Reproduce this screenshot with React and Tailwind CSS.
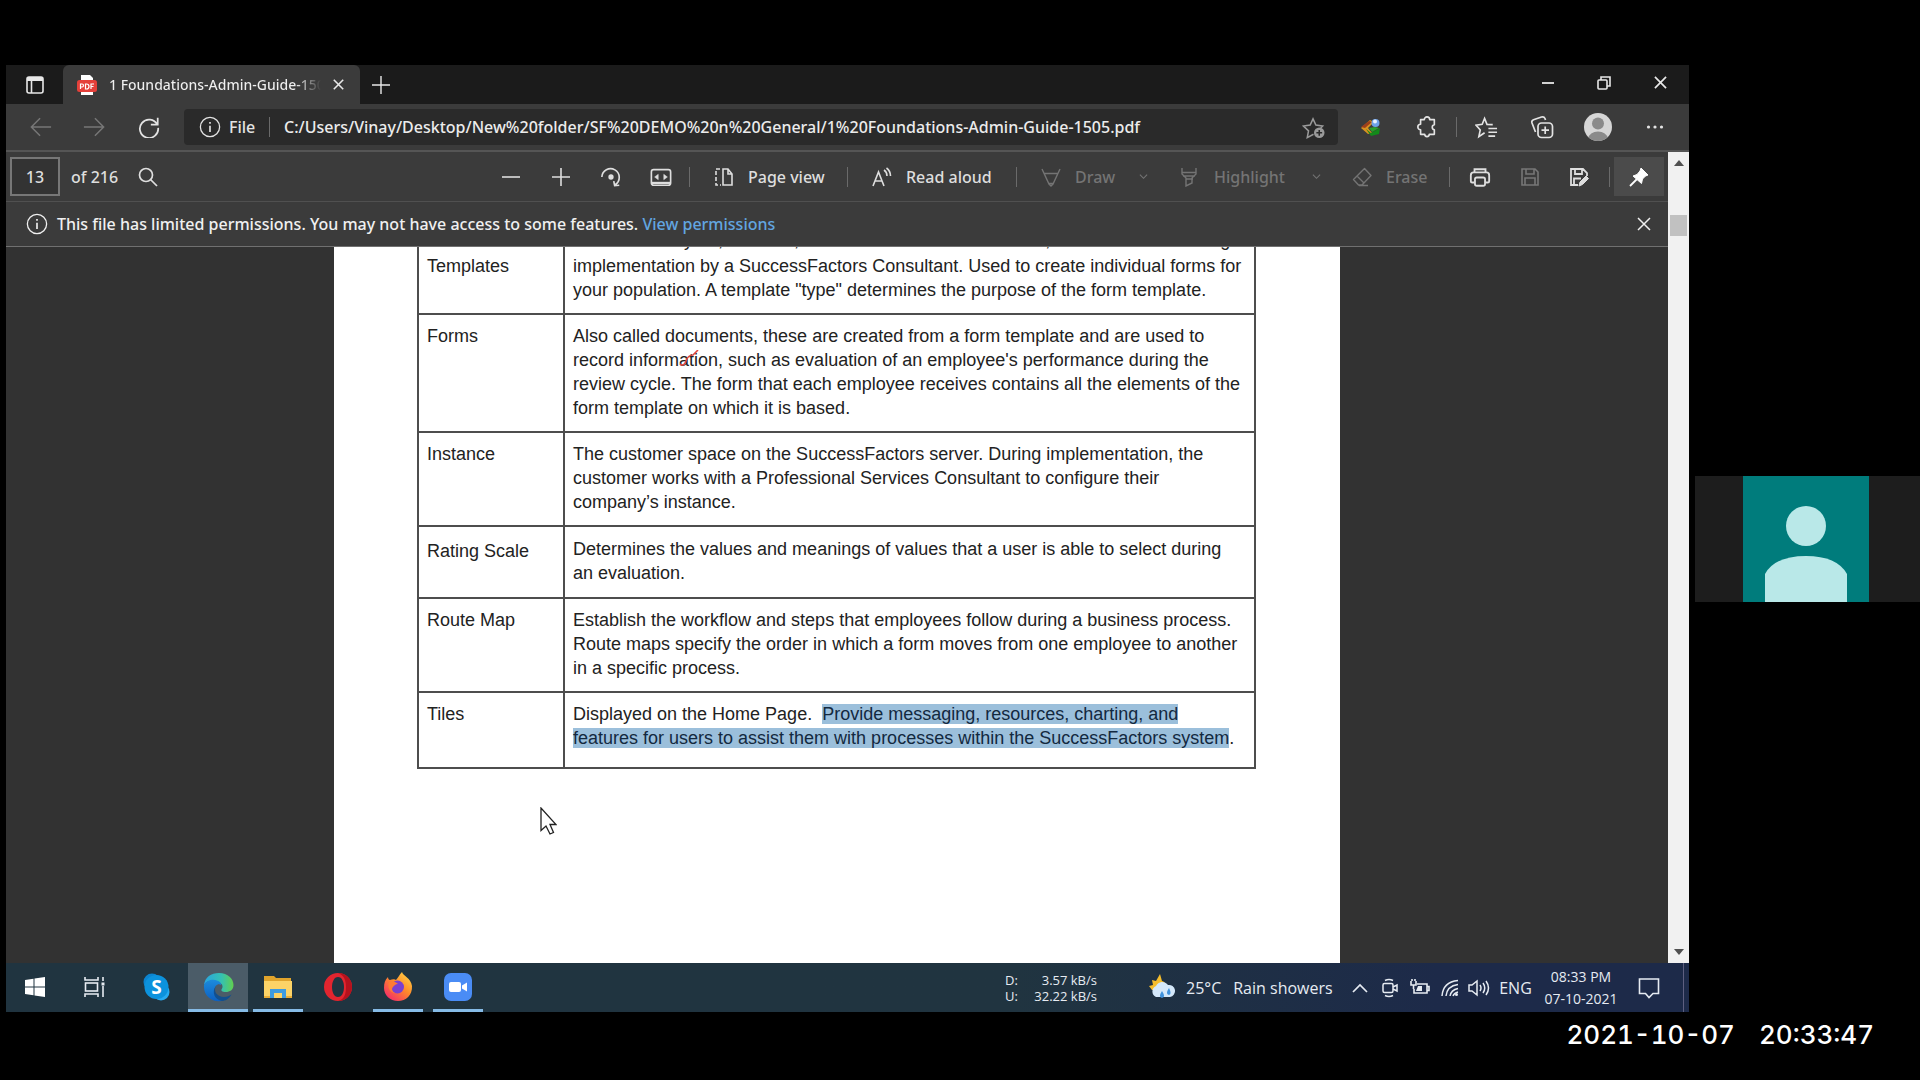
import React from 'react';

const UI = "font-['Noto_Sans','Open_Sans',sans-serif]";

function Icon({ size = 24, className = '', children, sw = 1.6, box = 24 }) {
  return (
    <svg width={size} height={size} viewBox={`0 0 ${box} ${box}`} fill="none" stroke="currentColor" strokeWidth={sw} className={`shrink-0 ${className}`} aria-hidden="true">
      {children}
    </svg>
  );
}

function IconButton({ label, className = 'w-[50px]', children }) {
  return (
    <button type="button" aria-label={label} className={`flex shrink-0 items-center justify-center ${className}`}>
      {children}
    </button>
  );
}

const Divider = ({ className = '' }) => <span className={`h-5 w-px shrink-0 bg-[#6a6a6a] ${className}`} />;

const Cross = ({ size = 14, sw = 1.8 }) => (
  <Icon size={size} box={14} sw={sw}><path d="M1 1l12 12M13 1L1 13" /></Icon>
);

const InfoIcon = () => (
  <Icon size={22} sw={1.4}><circle cx="12" cy="12" r="10.5" /><path d="M12 10.5v7M12 6.5v2" strokeWidth="1.8" /></Icon>
);

function TabBar() {
  return (
    <div className="flex h-[39px] shrink-0 bg-[#1b1b1b] text-[#e8e8e8]">
      <IconButton label="Tab actions" className="w-[57px]">
        <Icon size={20} box={20} sw={1.6}><rect x="2" y="2" width="16" height="16" rx="2" /><path d="M2 4h16" strokeWidth="4" /><path d="M6.500 5v13" /></Icon>
      </IconButton>
      <div className="flex w-[297px] items-center rounded-t-md bg-[#3b3b3b] pl-3.5">
        <svg width="20" height="22" viewBox="0 0 20 22" className="shrink-0" aria-hidden="true">
          <path d="M4 1h9l3 3v17H4z" fill="#fff" />
          <rect x="0" y="6" width="20" height="12" rx="2.500" fill="#e5403a" />
          <path d="M3.500 15v-5h1.500a1.500 1.500 0 0 1 0 3H3.500M8.500 10v5h1a2.500 2.500 0 0 0 0-5zM14 15v-5h3M14 12.500h2.500" stroke="#fff" strokeWidth="1.200" fill="none" />
        </svg>
        <span className="ml-3 w-[212px] overflow-hidden whitespace-nowrap bg-linear-to-r from-[#f0f0f0] from-88% to-transparent bg-clip-text text-sm font-medium text-transparent">1 Foundations-Admin-Guide-1505.pdf</span>
        <IconButton label="Close tab" className="w-[34px]"><Cross size={11} sw={2} /></IconButton>
      </div>
      <IconButton label="New tab" className="w-[42px]">
        <Icon size={18} box={18} sw={1.4}><path d="M9 0v18M0 9h18" /></Icon>
      </IconButton>
      <div className="flex-1" />
      <div className="flex h-[35px]">
        <IconButton label="Minimize" className="w-[56px]"><Icon size={12} box={12} sw={1.8}><path d="M0 6h12" /></Icon></IconButton>
        <IconButton label="Restore" className="w-[56px]">
          <Icon size={14} box={14} sw={1.6}><rect x="1" y="4" width="9" height="9" rx="1" /><path d="M4 4V1h9v9h-3" /></Icon>
        </IconButton>
        <IconButton label="Close" className="w-[57px]"><Cross size={13} sw={1.8} /></IconButton>
      </div>
    </div>
  );
}

function AddressBar() {
  return (
    <div className="flex h-12 shrink-0 items-center border-b-2 border-[#555] bg-[#3b3b3b] text-[#e3e3e3]">
      <IconButton label="Back" className="ml-2.5 w-[50px] text-[#777]"><Icon size={22} sw={1.6}><path d="M23 12H2M11 2.500L1.500 12l9.500 9.500" /></Icon></IconButton>
      <IconButton label="Forward" className="w-[56px] text-[#777]"><Icon size={22} sw={1.6}><path d="M1 12h21M13 2.500L22.500 12 13 21.500" /></Icon></IconButton>
      <IconButton label="Refresh" className="w-[54px]"><Icon size={22} sw={1.900}><path d="M21 9.500A10 10 0 1 0 22 13M21.500 2v7.500H14" /></Icon></IconButton>
      <div className="ml-2 flex h-[36px] flex-1 items-center rounded-sm bg-[#2a2a2a] pl-[15px]">
        <InfoIcon />
        <span className="ml-2 w-[32px] text-base font-medium">File</span>
        <Divider className="ml-2 mr-[14px]" />
        <input aria-label="Address" readOnly value="C:/Users/Vinay/Desktop/New%20folder/SF%20DEMO%20n%20General/1%20Foundations-Admin-Guide-1505.pdf" className="min-w-0 flex-1 bg-transparent text-base font-medium text-[#ececec] outline-none" />
        <IconButton label="Add to favorites" className="w-[50px] text-[#9a9a9a]">
          <Icon size={23} sw={1.6}>
            <path d="M12 19l-6.500 3.500 1.300-7L1.500 10.500l7-1L11.500 3l3 6.500 7 1-2 2" />
            <circle cx="18" cy="17.500" r="5.500" fill="#9a9a9a" stroke="none" /><path d="M18 14.500v6M15 17.500h6" stroke="#2a2a2a" />
          </Icon>
        </IconButton>
      </div>
      <IconButton label="Download manager" className="ml-1.5 w-[54px]">
        <svg width="20" height="18" viewBox="0 0 20 18" aria-hidden="true">
          <path d="M0 10L9 2l4 2-6 6 4 5-4 1z" fill="#d9911f" />
          <path d="M0 9L8 3l3 1-7 6z" fill="#9c3f1c" />
          <path d="M5 11l5 4 9-5-1 6-8 2z" fill="#128a1a" />
          <circle cx="14.500" cy="5" r="4" fill="#6fa2e8" /><circle cx="14" cy="3.500" r="2" fill="#e9f2ff" />
          <path d="M8 10l6-1 4 1-7 4z" fill="#2ba12c" />
        </svg>
      </IconButton>
      <IconButton label="Extensions" className="w-[58px]">
        <Icon size={22} sw={1.800}><path d="M9 4a3 3 0 0 1 6 0h5v5.500a2.800 2.800 0 0 0 0 5.500v5h-5.500a2.500 2.500 0 0 1-5 0H5v-5a3 3 0 0 1 0-6V4z" strokeLinejoin="round" /></Icon>
      </IconButton>
      <Divider />
      <IconButton label="Favorites" className="w-[58px]">
        <Icon size={23} sw={1.700}><path d="M10 17.500L4 21.500l1.500-7L1 9.500l6.500-.8L10 2.500l2.500 6.200 6 .3M14 13h9M14 17h9M14 21h7M12 11.500h0" /></Icon>
      </IconButton>
      <IconButton label="Collections" className="w-[54px]">
        <Icon size={24} sw={1.700}><rect x="8" y="8" width="14.500" height="14.500" rx="3.500" /><path d="M15.200 11.500v7.500M11.500 15.200h7.500M5.500 17L2 8q-.8-2.500 1.500-3.300l8-2.700q2.500-.8 3.500 1.500l.5 1.500" /></Icon>
      </IconButton>
      <IconButton label="Profile" className="w-[58px]">
        <svg width="28" height="28" viewBox="0 0 28 28" aria-hidden="true">
          <defs><clipPath id="av"><circle cx="14" cy="14" r="14" /></clipPath></defs>
          <g clipPath="url(#av)"><path d="M0 0h28v28H0z" fill="#d6d6d6" /><circle cx="14" cy="10.500" r="6" fill="#8a8a8a" /><ellipse cx="14" cy="25" rx="9.500" ry="6.500" fill="#8a8a8a" /></g>
        </svg>
      </IconButton>
      <IconButton label="Settings and more" className="mr-[6px] w-[56px]">
        <Icon size={18} box={18}><g fill="currentColor" stroke="none"><circle cx="2.500" cy="9" r="1.600" /><circle cx="9" cy="9" r="1.600" /><circle cx="15.500" cy="9" r="1.600" /></g></Icon>
      </IconButton>
    </div>
  );
}

function ToolButton({ label, className, icon }) {
  return (
    <button type="button" className={`flex shrink-0 items-center gap-3.5 text-base font-medium ${className}`}>
      {icon}
      <span className="whitespace-nowrap">{label}</span>
    </button>
  );
}

const Chevron = () => <Icon size={9} box={10} sw={1.2}><path d="M1 3l4 4 4-4" /></Icon>;

function PdfToolbar() {
  return (
    <div className="flex h-[50px] shrink-0 items-center border-b border-[#505050] bg-[#3b3b3b] text-[#dedede]">
      <input aria-label="Page number" defaultValue="13" className="ml-1 h-[39px] w-[50px] border-2 border-[#777] bg-[#333] text-center text-base font-medium" />
      <span className="ml-[11px] w-[48px] whitespace-nowrap text-base font-medium">of 216</span>
      <IconButton label="Find" className="ml-2 w-[42px]"><Icon size={20} box={20} sw={1.700}><circle cx="8" cy="8" r="6.500" /><path d="M12.500 12.500L19 19" /></Icon></IconButton>
      <div className="flex-1" />
      <IconButton label="Zoom out"><Icon size={18} box={18} sw={1.600}><path d="M0 9h18" /></Icon></IconButton>
      <IconButton label="Zoom in"><Icon size={18} box={18} sw={1.600}><path d="M0 9h18M9 0v18" /></Icon></IconButton>
      <IconButton label="Rotate">
        <Icon size={22} sw={1.800}><circle cx="12" cy="12" r="2" fill="currentColor" /><path d="M2 12a9.500 9.500 0 1 1 14.500 8.500M15 16.500l1 5 5-.5" /></Icon>
      </IconButton>
      <IconButton label="Fit to width">
        <Icon size={22} sw={1.800}><rect x="1.500" y="4" width="21" height="17" rx="2.500" /><path d="M2 18.500h20" strokeWidth="2.500" /><path d="M5 12l4-3v6zM19 12l-4-3v6z" fill="currentColor" strokeWidth=".5" /></Icon>
      </IconButton>
      <Divider className="ml-[3px]" />
      <ToolButton label="Page view" className="w-[157px] pl-6" icon={
        <Icon size={20} box={20} sw={1.600}><path d="M9 2v16h9V7l-4-5zM14 2v5h4" /><path d="M6 2H2v16h5" strokeDasharray="4 2" /></Icon>
      } />
      <Divider />
      <ToolButton label="Read aloud" className="w-[168px] pl-6" icon={
        <Icon size={20} box={20} sw={1.600}><path d="M1 19L6.500 5 12 19M3 14h7M12 3q3 2 3 6M14.500 1q4 3 4 8" /></Icon>
      } />
      <Divider />
      <div className="flex h-full text-[#747474]">
        <ToolButton label="Draw" className="w-[111px] pl-6" icon={<Icon size={20} box={20} sw={1.400}><path d="M1 2l7 15 2 2 2-2 7-15M3 6.500h14M8 16.500h4" /></Icon>} />
        <IconButton label="Draw options" className="w-[30px]"><Chevron /></IconButton>
        <ToolButton label="Highlight" className="w-[143px] pl-[22px]" icon={<Icon size={20} box={20} sw={1.400}><path d="M2 1v6l4 4v8l6-3v-5l4-4V1M2 5.500h14M3 9h12M6 12h7" /></Icon>} />
        <IconButton label="Highlight options" className="w-[30px]"><Chevron /></IconButton>
        <ToolButton label="Erase" className="w-[118px] pl-[21px]" icon={<Icon size={20} box={20} sw={1.400}><path d="M12.500 1.500L1.500 12.500l5 5.500h3.500L19 8.500zM5 9l7 7M7 18.500h9" strokeLinejoin="round" /></Icon>} />
      </div>
      <Divider />
      <IconButton label="Print" className="ml-[5px] w-[50px]">
        <Icon size={22} sw={2}><path d="M6 7V3.500h12V7" /><path d="M6 18H3.500q-1.500 0-1.500-1.500V10q0-3 3-3h14q3 0 3 3v6.500q0 1.500-1.500 1.500H18" /><rect x="6.500" y="12.500" width="11" height="9" rx="2" /></Icon>
      </IconButton>
      <IconButton label="Save" className="w-[50px] text-[#777]">
        <Icon size={20} box={20} sw={1.600}><path d="M2 2h13l3 3v13H2zM6 2v5h8V2M5 18v-7h10v7" /></Icon>
      </IconButton>
      <IconButton label="Save as" className="w-[48px]">
        <Icon size={20} box={20} sw={1.800}><path d="M9 18H2V2h12l4 4v3M6 2v5h7V2M5 18v-6.500h7" /><path d="M10 19l1-4 6-6 2.500 2.500-6 6z" fill="currentColor" strokeWidth="1" /></Icon>
      </IconButton>
      <Divider className="ml-1.5 mr-1" />
      <IconButton label="Unpin toolbar" className="mr-1 h-[39px] w-[50px] bg-[#4b4b4b] text-white">
        <Icon size={20} box={20} sw={1.800}><path d="M12 1l7 7-2.500 1-3 3-1 4.500L4 9l4-1.500 3-3.500z" fill="currentColor" strokeLinejoin="round" strokeWidth="1" /><path d="M8 12L1 19" /></Icon>
      </IconButton>
    </div>
  );
}

function PermissionBar() {
  return (
    <div className="flex h-[45px] shrink-0 items-center border-b border-[#707070] bg-[#3b3b3b] pl-[20px] text-base font-medium text-[#f0f0f0]">
      <InfoIcon />
      <p className="ml-[9px] whitespace-nowrap">This file has limited permissions. You may not have access to some features. <a href="#permissions" className="text-[#62a6e0]">View permissions</a></p>
      <div className="flex-1" />
      <IconButton label="Dismiss" className="w-[49px]"><Cross size={14} sw={1.500} /></IconButton>
    </div>
  );
}

const Sel = ({ children }) => <span className="bg-[#9bbfdb] text-[#13293f]">{children}</span>;

const rows = [
  { term: ['Form', 'Templates'], lead: true, lines: [
    'Determines layout, sections, and the fields of the document, and is selected during',
    'implementation by a SuccessFactors Consultant. Used to create individual forms for',
    'your population. A template "type" determines the purpose of the form template.',
  ] },
  { term: ['Forms'], lines: [
    'Also called documents, these are created from a form template and are used to',
    <>record inform<span className="relative">ati<svg className="absolute left-0 top-0" width="24" height="18" viewBox="0 0 24 18" fill="none" stroke="#e0473f" strokeWidth="1.600" aria-hidden="true"><path d="M1 14q4 3 6-3t7-6l5-5" /></svg></span>on, such as evaluation of an employee's performance during the</>,
    'review cycle. The form that each employee receives contains all the elements of the',
    'form template on which it is based.',
  ] },
  { term: ['Instance'], lines: [
    'The customer space on the SuccessFactors server. During implementation, the',
    'customer works with a Professional Services Consultant to configure their',
    'company’s instance.',
  ] },
  { term: ['Rating Scale'], termPad: 'pt-3', pad: 'pt-2.5 pb-3', lines: [
    'Determines the values and meanings of values that a user is able to select during',
    'an evaluation.',
  ] },
  { term: ['Route Map'], lines: [
    'Establish the workflow and steps that employees follow during a business process.',
    'Route maps specify the order in which a form moves from one employee to another',
    'in a specific process.',
  ] },
  { term: ['Tiles'], pad: 'pt-[9px] pb-[17px]', lines: [
    <>Displayed on the Home Page.&nbsp; <Sel>Provide messaging, resources, charting, and</Sel></>,
    <><Sel>features for users to assist them with processes within the SuccessFactors system</Sel>.</>,
  ] },
];

function Document() {
  return (
    <div className="flex min-h-0 flex-1 justify-center overflow-hidden bg-[#323232]">
      <div className="relative w-[1006px] bg-white pl-[83px]">
        <table className="-mt-[30px] w-[839px] table-fixed border-collapse border-2 border-[#4d4d4d] text-left font-['Liberation_Sans',Arial,sans-serif] text-[18px] leading-6 text-[#222]">
          <colgroup><col className="w-[146px]" /><col /></colgroup>
          <tbody>
            {rows.map((r) => (
              <tr key={r.term.join(' ')}>
                <th scope="row" className={`border-2 border-[#4d4d4d] pl-2 align-top font-normal ${r.termPad || 'pt-[9px]'}`}>
                  {r.term.map((t, i) => <span key={t} className={r.lead && i === 0 ? 'block pb-0.5' : 'block'}>{t}</span>)}
                </th>
                <td className={`border-2 border-[#4d4d4d] pl-2 align-top ${r.pad || 'pt-[9px] pb-[11px]'}`}>
                  {r.lines.map((l, i) => <span key={i} className={r.lead && i === 0 ? 'block whitespace-nowrap pb-0.5' : 'block whitespace-nowrap'}>{l}</span>)}
                </td>
              </tr>
            ))}
          </tbody>
        </table>
        <svg className="absolute left-[206px] top-[560px]" width="17" height="28" viewBox="0 0 17 28" aria-hidden="true">
          <path d="M1 1v22.500l5-4.500 4 8 3.500-1.500-3.500-8h6z" fill="#fff" stroke="#222" strokeWidth="1.300" />
        </svg>
      </div>
    </div>
  );
}

function Scrollbar() {
  return (
    <div className="flex w-[21px] shrink-0 flex-col items-center bg-[#f1f1f1] text-[#505050]">
      <IconButton label="Scroll up" className="h-[22px] w-full"><svg width="10" height="6" viewBox="0 0 10 6" aria-hidden="true"><path d="M0 6l5-6 5 6z" fill="currentColor" /></svg></IconButton>
      <div className="mt-[41px] h-[21px] w-[17px] bg-[#c1c1c1]" />
      <div className="flex-1" />
      <IconButton label="Scroll down" className="h-[22px] w-full"><svg width="10" height="6" viewBox="0 0 10 6" aria-hidden="true"><path d="M0 0h10L5 6z" fill="currentColor" /></svg></IconButton>
    </div>
  );
}

function TaskItem({ label, className = 'w-[60px]', bar, children }) {
  return (
    <button type="button" aria-label={label} className={`flex h-full shrink-0 flex-col items-center ${className}`}>
      <span className="flex flex-1 items-center pt-0.5">{children}</span>
      <span className={`h-[3px] ${bar || 'w-0'} bg-[#86bbe6]`} />
    </button>
  );
}

function Taskbar() {
  return (
    <div className="flex h-[49px] shrink-0 items-center bg-linear-to-r from-[#203440] from-60% to-[#1d2a49] to-85% text-[#e6ebf2]">
      <TaskItem label="Start" className="w-[58px]">
        <svg width="20" height="20" viewBox="0 0 20 20" fill="#fff" aria-hidden="true"><path d="M0 3l8.500-1.200v7.700H0zM9.500 1.600L20 0v9.500H9.500zM0 10.500h8.500v7.700L0 17zM9.500 10.500H20V20L9.500 18.400z" /></svg>
      </TaskItem>
      <TaskItem label="Task view" className="w-[60px]">
        <svg width="21" height="20" viewBox="0 0 21 20" fill="none" stroke="#e6ebf2" strokeWidth="1.600" aria-hidden="true"><path d="M1 0v3h13V0M1 20v-3h13v3M19 0v4M19 9v11" /><rect x="1.500" y="6" width="12" height="8" /><rect x="17.500" y="5.500" width="3" height="3" fill="#e6ebf2" stroke="none" /></svg>
      </TaskItem>
      <TaskItem label="Skype" className="w-[64px]">
        <svg width="27" height="28" viewBox="0 0 27 28" aria-hidden="true"><circle cx="9" cy="9" r="8.500" fill="#0b84d0" /><circle cx="18" cy="19" r="8.500" fill="#27aaf0" /><circle cx="13.500" cy="14" r="12" fill="#0c92dd" /><text x="13.500" y="21" textAnchor="middle" fontSize="19" fontWeight="700" fill="#fff" fontFamily="Open Sans, sans-serif">S</text></svg>
      </TaskItem>
      <TaskItem label="Microsoft Edge" className="w-[60px] bg-[#4b5c68]" bar="w-full">
        <svg width="31" height="30" viewBox="0 0 31 30" aria-hidden="true">
          <defs>
            <linearGradient id="e1" x1="0" x2="1"><stop offset="0" stopColor="#2aa4e0" /><stop offset=".6" stopColor="#35c1b1" /><stop offset="1" stopColor="#62cf4e" /></linearGradient>
            <linearGradient id="e2" x1="0" y1="0" x2="0" y2="1"><stop offset="0" stopColor="#1c8bdc" /><stop offset="1" stopColor="#0d5fc0" /></linearGradient>
          </defs>
          <path d="M1 13C2 5 8 1 16 1c9 0 14.500 6 14.500 12 0 5-4 7-7.500 7-4 0-5-1.500-4.500-2.500 1-1.500 1.500-3 .5-5C16 8 5 6 1 13z" fill="url(#e1)" />
          <path d="M1 13c2.500-5 9-6 13-4.500 3 1.200 4.500 3 4 4.500-3-2-7 1-6.500 6 .5 5 4.500 9 9 9.500C11 31.500 0 25 1 13z" fill="url(#e2)" />
          <path d="M13 14c-3 5 1 11 8 11 3 0 6-1.500 7.500-2.500C26 27 22 29 19 29c-7-1-11-9-6-15z" fill="#124f8e" />
        </svg>
      </TaskItem>
      <TaskItem label="File Explorer" className="w-[60px]" bar="w-[50px]">
        <svg width="28" height="24" viewBox="0 0 28 24" aria-hidden="true"><path d="M0 1h10l2 2h15v19H0z" fill="#e0a42c" /><path d="M0 6h28v17H0z" fill="#fcd367" /><path d="M6 23v-9h16v9h-4v-5h-8v5z" fill="#3d9be0" /><path d="M0 21h6v2H0zM22 21h6v2h-6z" fill="#e9ac35" /></svg>
      </TaskItem>
      <TaskItem label="Opera" className="w-[60px]">
        <svg width="28" height="30" viewBox="0 0 28 30" aria-hidden="true"><path fillRule="evenodd" d="M14 1a14 14 0 1 1 0 28 14 14 0 0 1 0-28zm0 4c-4 0-6 5-6 10s2 10 6 10 6-5 6-10-2-10-6-10z" fill="#e2252f" /><path d="M14 1c8 0 14 6 14 14s-6 14-14 14c3.500-1 8-3 8-14S17 2.500 14 1z" fill="#b5121d" /></svg>
      </TaskItem>
      <TaskItem label="Firefox" className="w-[60px]" bar="w-[50px]">
        <svg width="30" height="30" viewBox="0 0 30 30" aria-hidden="true">
          <defs><linearGradient id="ff" x1="1" y1="0" x2=".2" y2="1"><stop offset="0" stopColor="#ffe14a" /><stop offset=".5" stopColor="#ff8a2a" /><stop offset="1" stopColor="#f5296b" /></linearGradient></defs>
          <path d="M19 0c1 4 9 6 10 14 .5 9-6 15-14 15S1 23 1 16c0-5 1-8 4-11 0 2 1 3 2 3 2-1 5-1 6 0 2-2 3-5 6-8z" fill="url(#ff)" />
          <circle cx="14.500" cy="15" r="6.500" fill="#7a3fd0" /><path d="M6 10c4-2 7 0 9 2-3 0-4 2-5 3s-2 4 2 6c-5 0-8-6-6-11z" fill="#ff7a33" />
        </svg>
      </TaskItem>
      <TaskItem label="Zoom" className="w-[60px]" bar="w-[50px]">
        <svg width="28" height="28" viewBox="0 0 28 28" aria-hidden="true"><rect width="28" height="28" rx="7" fill="#4a8cf5" /><rect x="5" y="9" width="12" height="10" rx="2" fill="#fff" /><path d="M18 12.500l5-3v9l-5-3z" fill="#fff" /></svg>
      </TaskItem>
      <div className="flex-1" />
      <div className="grid w-[92px] shrink-0 grid-cols-[auto_1fr] text-right font-['Open_Sans',sans-serif] text-[13px] leading-4">
        <span>D:</span><span>3.57 kB/s</span><span>U:</span><span>32.22 kB/s</span>
      </div>
      <button type="button" className="ml-[52px] flex w-[196px] shrink-0 items-center whitespace-nowrap font-['Open_Sans',sans-serif] text-base">
        <svg width="27" height="27" viewBox="0 0 27 27" aria-hidden="true"><path d="M11 0l2 7c4 1 5 5 3 9H3l-3-4 4-1-1-5 4 1z" fill="#f5bd2c" /><path d="M7 23a6 6 0 0 1 0-11 7 7 0 0 1 12-1 6 6 0 0 1 2 12z" fill="#d4e8fa" /><path d="M13 17q-4 6 0 7 4-1 0-7zM20 14q-4 6 0 7 3-1 0-7z" fill="#3f92dd" /></svg>
        <span className="ml-2.5">25°C</span><span className="ml-3">Rain showers</span>
      </button>
      <IconButton label="Show hidden icons" className="w-[30px]"><Icon size={16} box={16} sw={1.700}><path d="M1 12l7-7 7 7" /></Icon></IconButton>
      <IconButton label="Meet now" className="w-[30px]"><Icon size={20} box={20} sw={1.500}><rect x="3" y="5.500" width="10" height="9" rx="1.500" /><path d="M13 9l4-2v6l-4-2M5 2.500q4-2 8 0M5 17.500q4 2 8 0" /></Icon></IconButton>
      <IconButton label="Battery" className="w-[30px]"><Icon size={20} box={20} sw={1.600}><path d="M7 6h10v9H4v-4M17 8.500h2v4h-2M1 3v4h5V3M3.500 7v4M2 1v2M5 1v2" /><path d="M8 8h4v5H6z" fill="currentColor" stroke="none" /></Icon></IconButton>
      <IconButton label="Wi-Fi" className="w-[30px]"><Icon size={18} box={18} sw={1.500}><path d="M1 17Q2 3 17 1.500M5 17Q6 7 17 5.500M9 17q1-6 8-7.500M12 17q1-3 5-4" /><circle cx="15.500" cy="15.500" r="1.500" fill="currentColor" stroke="none" /></Icon></IconButton>
      <IconButton label="Volume" className="w-[28px]"><Icon size={22} box={22} sw={1.500}><path d="M1 8v6h3l5 4V4L4 8zM12 8q2 3 0 6M15 6q3.500 5 0 10M18 4q5 7 0 14" /></Icon></IconButton>
      <span className="w-[45px] text-center font-['Open_Sans',sans-serif] text-base">ENG</span>
      <div className="w-[86px] text-center font-['Open_Sans',sans-serif] text-sm leading-[22px]">
        <div>08:33 PM</div>
        <div>07-10-2021</div>
      </div>
      <IconButton label="Notifications" className="ml-[3px] w-[44px]"><Icon size={22} box={22} sw={1.600}><path d="M1.500 2h19v14.500H15L11 20.500 7.500 16.500h-6z" /></Icon></IconButton>
      <span className="ml-3 mr-[5px] h-full w-px bg-[#5d5f80]" />
    </div>
  );
}

export default function App() {
  return (
    <div className={`flex h-screen flex-col overflow-hidden bg-black ${UI}`}>
      <div className="flex min-h-0 flex-1 pl-1.5 pt-[65px]">
        <main className="flex min-w-0 flex-1 flex-col">
          <TabBar />
          <AddressBar />
          <div className="flex min-h-0 flex-1">
            <div className="flex min-w-0 flex-1 flex-col">
              <PdfToolbar />
              <PermissionBar />
              <Document />
            </div>
            <Scrollbar />
          </div>
          <Taskbar />
        </main>
        <aside className="ml-1.5 flex w-[225px] shrink-0 flex-col">
          <div className="mt-[411px] flex h-[126px] bg-[#1d1d1d] pl-12">
            <svg width="126" height="126" viewBox="0 0 126 126" role="img" aria-label="Participant">
              <path d="M0 0h126v126H0z" fill="#007c7c" /><circle cx="63" cy="50" r="20" fill="#b9e8e8" />
              <path d="M22 126V98Q32 80 63 80t41 18v28z" fill="#b9e8e8" />
            </svg>
          </div>
        </aside>
      </div>
      <footer className="flex h-[68px] shrink-0 justify-end pr-[46px] pt-[5px] font-['Inter',sans-serif] text-[26px] font-medium tabular-nums leading-9 text-white">
        <time dateTime="2021-10-07T20:33:47" className="flex gap-6"><span>2021-10-07</span><span>20:33:47</span></time>
      </footer>
    </div>
  );
}
